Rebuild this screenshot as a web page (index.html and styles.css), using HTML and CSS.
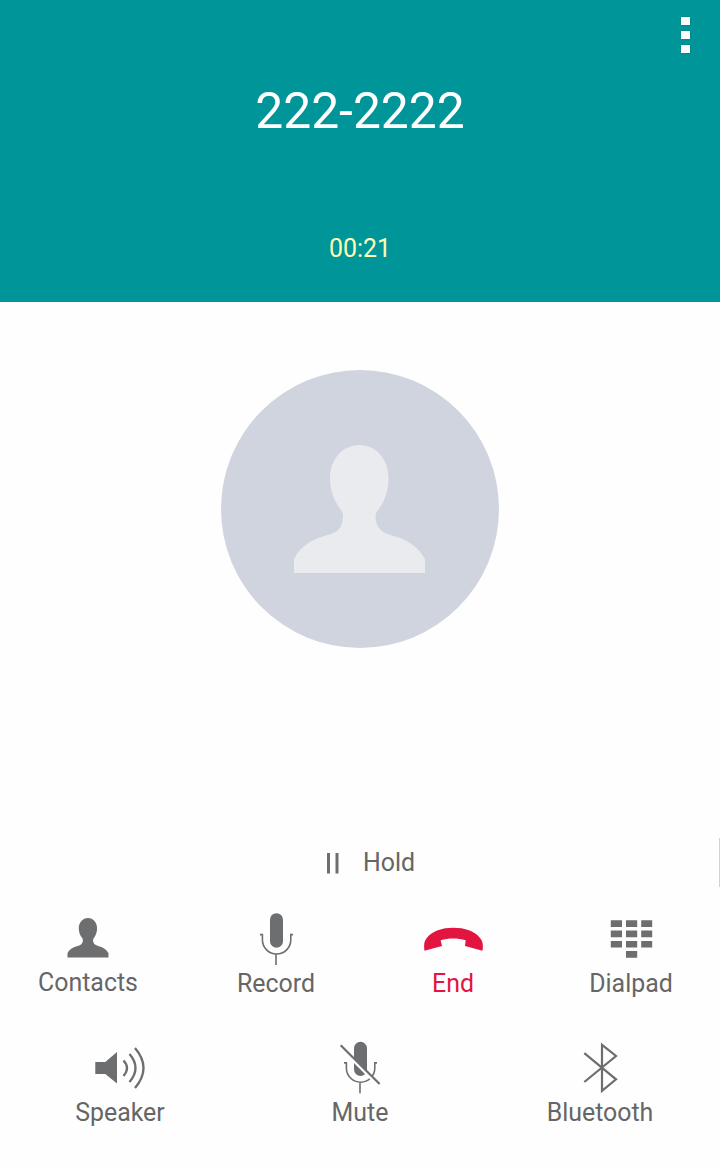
FILE: index.html
```
<!DOCTYPE html>
<html lang="en">
<head>
    <meta charset="UTF-8">
    <meta name="viewport" content="width=device-width, initial-scale=1.0">
    <title>In Call</title>
    <link rel="stylesheet" href="styles.css">
</head>
<body>

    <div class="call-screen">
        <!-- Call Header -->
        <header class="call-header">
            <button class="menu-button" aria-label="More options">
                <span class="dot"></span>
                <span class="dot"></span>
                <span class="dot"></span>
            </button>
            <div class="number">222-2222</div>
            <div class="timer">00:21</div>
        </header>

        <!-- Caller Picture -->
        <main class="caller">
            <div class="avatar">
                <svg class="avatar-icon" viewBox="0 0 131 128">
                    <path id="person" d="M0 128V114C6 101 19 94 32 90.5C43 88 49 83 49 71C49 68 48 66.5 47 65C41 57 36 47 36 33C36 14 49 0 65.5 0S94.5 14 94.5 33C94.5 47 90 57 84.5 64.5C82.5 67 81.5 69 81.5 72C82 82 87 87.5 98 90.5C112 94 124 101 131 114V128Z"/>
                </svg>
            </div>
        </main>

        <!-- Hold -->
        <div class="hold-row">
            <button class="hold-button">
                <svg class="hold-icon" viewBox="0 0 12 21">
                    <path d="M0 0H3V20.5H0ZM8.5 0H11.5V20.5H8.5Z"/>
                </svg>
                Hold
            </button>
        </div>

        <!-- Call Controls -->
        <div class="controls controls-top">
            <button class="control contacts">
                <svg class="icon" viewBox="0 0 60 60">
                    <use href="#person" transform="translate(9.5 11) scale(.313 .309)"/>
                </svg>
                Contacts
            </button>
            <button class="control">
                <svg class="icon" viewBox="0 0 60 60">
                    <rect x="24" y="5.2" width="13" height="34.5" rx="6.5"/>
                    <path class="line" d="M14 26.6H16.4V31.8A14.2 14.2 0 0 0 44.8 31.8V26.6H47M30 46V57"/>
                </svg>
                Record
            </button>
            <button class="control end">
                <svg class="icon" viewBox="0 0 60 60">
                    <path d="M1.5 42.7C.6 37 1.2 33 3.8 30C9 23 19 19.8 30.3 19.8S52 23 57 30C59.8 33 60.4 37 59.5 42.7L42 38L42.7 32.3C35 29.8 25 29.8 17.7 32.3L19 38Z"/>
                </svg>
                End
            </button>
            <button class="control">
                <svg class="icon" viewBox="0 0 60 60">
                    <path d="M9.8 12.3h11.2v6.7h-11.2zM25 12.3h11.2v6.7h-11.2zM40.2 12.3h11v6.7h-11zM9.8 22.6h11.2v6.7h-11.2zM25 22.6h11.2v6.7h-11.2zM40.2 22.6h11v6.7h-11zM9.8 32.9h11.2v6.7h-11.2zM25 32.9h11.2v6.7h-11.2zM40.2 32.9h11v6.7h-11zM25 43h11.2v6.8h-11.2z"/>
                </svg>
                Dialpad
            </button>
        </div>

        <div class="controls controls-bottom">
            <button class="control">
                <svg class="icon" viewBox="0 0 60 60">
                    <path d="M5.3 25H15.3L27 15V46.6L15.3 37H5.3Z"/>
                    <path class="wave" d="M33.5 23.5Q40.5 31 33.5 39M39.5 17Q51.5 31 39.5 45M45 11Q62 31 45 51"/>
                </svg>
                Speaker
            </button>
            <button class="control">
                <svg class="icon" viewBox="0 0 60 60">
                    <rect x="24" y="4.8" width="13" height="34.2" rx="6.5"/>
                    <path class="line" d="M14 25.9H16.4V31A14.2 14.2 0 0 0 44.8 31V25.9H47M30 45.3V56.3"/>
                    <path class="slash-gap" d="M13 13L47 47"/>
                    <path class="slash" d="M10.7 8.2L49.6 47"/>
                </svg>
                Mute
            </button>
            <button class="control">
                <svg class="icon" viewBox="0 0 60 60">
                    <path class="rune" d="M14.3 16.2L46 42.3L32 53.8V7.8L46 19L14.3 45"/>
                </svg>
                Bluetooth
            </button>
        </div>
    </div>

</body>
</html>
```
FILE: styles.css
```
body {
    margin: 0;
    font-family: Roboto, sans-serif;
    background-color: #fefefe;
    color: #666;
}

button {
    padding: 0;
    border: none;
    background: none;
    font: inherit;
    color: inherit;
    cursor: pointer;
}

.call-screen {
    width: 720px;
    height: 1170px;
    overflow: hidden;
}

/* Header */
.call-header {
    box-sizing: border-box;
    height: 302px;
    padding-top: 17px;
    background-color: #009599;
    text-align: center;
}

.menu-button {
    display: flex;
    flex-direction: column;
    gap: 6px;
    margin: 0 30px 0 auto;
}

.dot {
    width: 9px;
    height: 8px;
    background-color: #fcfcfc;
    box-shadow: 0 0 2px rgba(0, 0, 0, 0.3);
}

.number {
    margin-top: 28px;
    font-size: 49.8px;
    line-height: 60px;
    color: #fff;
}

.timer {
    margin-top: 93px;
    font-size: 24.9px;
    line-height: 30px;
    color: #ffffb4;
}

/* Caller picture */
.caller {
    height: 468px;
    padding-top: 68px;
}

.avatar {
    display: flex;
    justify-content: center;
    width: 278px;
    height: 278px;
    margin: 0 auto;
    border-radius: 50%;
    background-color: #d0d4df;
}

.avatar-icon {
    width: 131px;
    height: 128px;
    margin: 75px 1px 0 0;
    fill: #e9ebef;
}

/* Hold */
.hold-row {
    display: flex;
    justify-content: center;
    box-sizing: border-box;
    height: 49px;
    padding: 10px 0 0 23px;
    border-right: 1px solid #d2d2d2;
}

.hold-button {
    display: flex;
    align-items: center;
    gap: 24px;
    height: 30px;
    font-size: 24.9px;
    line-height: 30px;
}

.hold-icon {
    width: 12px;
    height: 21px;
    fill: #6d6e70;
}

/* Controls */
.controls {
    display: grid;
    justify-items: center;
    font-size: 24.9px;
    line-height: 30px;
}

.controls-top {
    grid-template-columns: 188px 177px 178px 120px;
    justify-items: start;
    padding: 21px 0 0 28px;
}

.controls-bottom {
    grid-template-columns: repeat(3, 1fr);
    margin-top: 38px;
}

.control {
    display: flex;
    flex-direction: column;
    align-items: center;
    gap: 1px;
    width: 120px;
}

.contacts {
    margin-top: -1px;
}

.end {
    color: #e21541;
}

.icon {
    width: 60px;
    height: 60px;
    fill: #6d6e70;
}

.end .icon {
    fill: #e21541;
}

.line,
.wave,
.rune,
.slash {
    fill: none;
    stroke: #6d6e70;
    stroke-width: 1.6;
}

.wave {
    stroke-width: 2.3;
}

.rune,
.slash {
    stroke-width: 2.2;
}

.slash-gap {
    stroke: #fefefe;
    stroke-width: 3;
}
```
